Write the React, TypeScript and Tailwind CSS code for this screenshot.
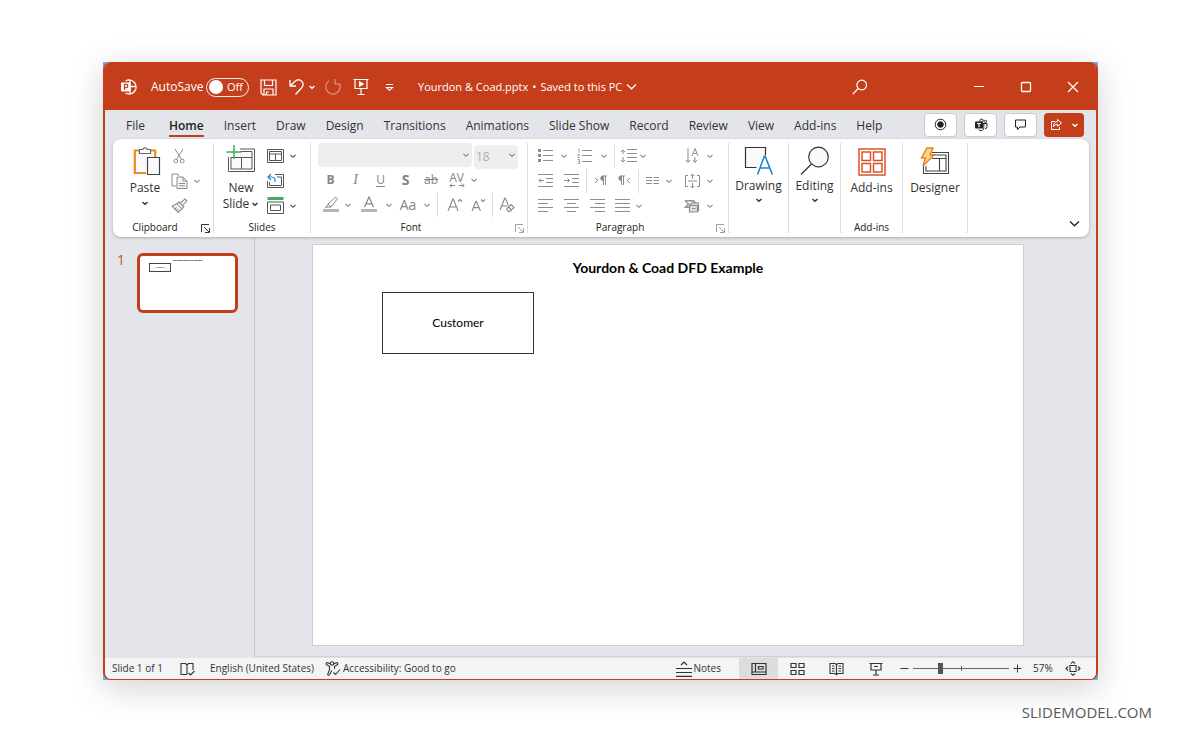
import type { ReactNode } from "react";

type IconProps = { w?: number; h?: number; sw?: number; className?: string; children: ReactNode };

function Icon({ w = 16, h = 16, sw = 1, className = "", children }: IconProps) {
  return (
    <svg
      width={w}
      height={h}
      viewBox={`0 0 ${w} ${h}`}
      fill="none"
      stroke="currentColor"
      strokeWidth={sw}
      className={`shrink-0 ${className}`}
      aria-hidden="true"
    >
      {children}
    </svg>
  );
}

function Chevron({ sw = 1.1 }: { sw?: number }) {
  return (
    <Icon w={8} h={8} sw={sw}>
      <path d="M1.5 3 4 5.3 6.5 3" />
    </Icon>
  );
}

function Cell({ w, label, children }: { w: string; label: string; children: ReactNode }) {
  return (
    <button type="button" aria-label={label} className={`flex h-[25px] shrink-0 items-center justify-center ${w}`}>
      {children}
    </button>
  );
}

function Drop({ label, w = "w-[10px]" }: { label: string; w?: string }) {
  return (
    <Cell w={w} label={`${label} options`}>
      <Chevron />
    </Cell>
  );
}

function Sep({ w }: { w: string }) {
  return (
    <span className={`flex h-6 shrink-0 justify-center ${w}`}>
      <span className="w-px bg-[#dcdcdc]" />
    </span>
  );
}

function Launcher() {
  return (
    <Icon w={9} h={9}>
      <path d="M.5 8V.5H8M3 3l5 5M8.5 4v4.5H4" />
    </Icon>
  );
}

function Group({ w, label, launcher, children }: { w: string; label?: string; launcher?: string; children: ReactNode }) {
  return (
    <section className={`flex shrink-0 flex-col border-r border-[#dcdcdc] ${w}`}>
      <div className="h-[77px]">{children}</div>
      <div
        className={
          launcher
            ? "relative flex flex-1 items-center justify-center pr-4 text-[10px] leading-3 text-[#222]"
            : "relative flex flex-1 items-center justify-center text-[10px] leading-3 text-[#222]"
        }
      >
        {label}
        {launcher && (
          <button type="button" aria-label={`${label} settings`} className={`absolute bottom-0 right-[3px] ${launcher}`}>
            <Launcher />
          </button>
        )}
      </div>
    </section>
  );
}

const tabs = [
  "File", "Home", "Insert", "Draw", "Design", "Transitions", "Animations",
  "Slide Show", "Record", "Review", "View", "Add-ins", "Help",
];

function TitleBar() {
  return (
    <header className="flex h-12 shrink-0 items-center bg-[#c43e1c] pl-[15px] pt-[2px] text-xs text-white">
      <Icon w={18} h={18} sw={1.3}>
        <path d="M5.5 3A7 7 0 1 1 5.5 15M10 2v14M10 8.5h6.5" />
        <rect x="1" y="4.500" width="9.500" height="9" rx="1" fill="white" stroke="none" />
        <path d="M4.500 11.800V6.400h1.700a1.600 1.600 0 0 1 0 3.200H4.500" stroke="#c43e1c" />
      </Icon>
      <label className="ml-[13px] flex items-center">
        <span className="w-[55px] whitespace-nowrap">AutoSave</span>
        <span className="relative flex h-[19px] w-[43px] items-center rounded-full border border-white/90">
          <input type="checkbox" className="absolute inset-0 appearance-none" />
          <span className="ml-[2px] size-[14px] rounded-full bg-white" />
          <span className="ml-1 text-[11px]">Off</span>
        </span>
      </label>
      <button type="button" aria-label="Save" className="ml-[11px]">
        <Icon w={17} h={17} sw={1.2}>
          <path d="M1 1h15v15H3l-2-2zM4.500 1v5.500h8V1M4 16v-6h9v6M6.500 16v-3h2.500" />
        </Icon>
      </button>
      <button type="button" aria-label="Undo" className="ml-3">
        <Icon w={16} h={18} sw={1.3}>
          <path d="M1 2v6h6M1.300 7.700 5.800 3.500c2.200-2 5-2 6.900-.3s1.900 4.500 0 6.500L6.500 16.500" />
        </Icon>
      </button>
      <button type="button" aria-label="Undo options" className="ml-[3px]">
        <Chevron sw={1.4} />
      </button>
      <button type="button" aria-label="Redo" className="ml-2 text-white/45">
        <Icon w={18} h={18} sw={1.2}>
          <path d="M11 1v5h5M5 2.800A7.200 7.200 0 1 0 15.600 6" />
        </Icon>
      </button>
      <button type="button" aria-label="Start slide show" className="ml-[11px]">
        <Icon w={16} h={18} sw={1.2}>
          <path d="M.5 1.500h15M2 1.500v9h12v-9M8 10.500V16M4.500 16.500h7" />
          <path d="M6.500 3.800v4.400L10.200 6z" fill="currentColor" />
        </Icon>
      </button>
      <button type="button" aria-label="Customize toolbar" className="ml-4">
        <Icon w={9} h={9} sw={1.1}>
          <path d="M1 1.500h7M1.500 4.500h6L4.500 7.300z" />
        </Icon>
      </button>
      <button type="button" className="ml-6 flex items-center gap-1 whitespace-nowrap text-[11px]">
        <span>Yourdon &amp; Coad.pptx</span>
        <span>•</span>
        <span>Saved to this PC</span>
        <Icon w={11} h={8} sw={1.3}>
          <path d="m1 1.500 4.500 4.300L10 1.500" />
        </Icon>
      </button>
      <span className="flex-1" />
      <button type="button" aria-label="Search" className="mr-[72px] flex w-[46px] justify-center">
        <Icon w={16} h={16} sw={1.2}>
          <circle cx="9.700" cy="6" r="4.800" />
          <path d="m6.200 9.500-5.400 5.700" />
        </Icon>
      </button>
      <button type="button" aria-label="Minimize" className="flex w-[47px] justify-center">
        <Icon w={12} h={12} sw={1.2}><path d="M1 5.500h10" /></Icon>
      </button>
      <button type="button" aria-label="Maximize" className="flex w-[47px] justify-center">
        <Icon w={12} h={12} sw={1.3}><rect x="1.500" y="1.500" width="9" height="9" rx="1" /></Icon>
      </button>
      <button type="button" aria-label="Close" className="flex w-[47px] justify-center">
        <Icon w={12} h={12} sw={1.2}><path d="m1 1 10 10M11 1 1 11" /></Icon>
      </button>
    </header>
  );
}

function TabBar() {
  const box = "flex h-6 items-center justify-center rounded border border-[#c9cacd] bg-white text-[#222] w-[33px]";
  const tab = "whitespace-nowrap border-b-2 leading-[18px]";
  return (
    <nav className="flex h-[29px] shrink-0 items-center pl-[21px] pr-3 text-xs text-[#333]">
      <div className="flex gap-5 pt-1">
        {tabs.map((t) => (
          <a
            key={t}
            href="#"
            className={
              t === "Home"
                ? `${tab} ml-1 border-[#c43e1c] font-semibold text-[#222]`
                : `${tab} border-transparent`
            }
          >
            {t}
          </a>
        ))}
      </div>
      <div className="ml-auto flex gap-[7px]">
        <button type="button" aria-label="Record" className={box}>
          <Icon w={13} h={13}>
            <circle cx="6.500" cy="6.500" r="5.300" />
            <circle cx="6.500" cy="6.500" r="2.800" fill="currentColor" />
          </Icon>
        </button>
        <button type="button" aria-label="Present in Teams" className={box}>
          <Icon w={14} h={14}>
            <circle cx="7.500" cy="2.800" r="1.700" />
            <circle cx="11.500" cy="3.400" r="1.100" />
            <path d="M9 5.500h4v3.200a2 2 0 0 1-2 2M9.800 5.500v4a3 3 0 0 1-5.200 2.200" />
            <rect x="1" y="3.500" width="8" height="7" rx="1" fill="currentColor" stroke="none" />
            <path d="M3 5.500h4M5 5.500v3.800" stroke="white" strokeWidth={1.2} />
          </Icon>
        </button>
        <button type="button" aria-label="Comments" className={box}>
          <Icon w={13} h={13}>
            <path d="M1.500 2h10v7H6l-2.600 2.600V9H1.500z" />
          </Icon>
        </button>
        <button type="button" aria-label="Share" className="flex h-6 w-10 items-center justify-center gap-2 rounded bg-[#c43e1c] text-white">
          <Icon w={13} h={13}>
            <path d="M5 3.500H1.500v8h8V9M7.500 1.500 11.600 5 7.500 8.300V6.400C5.700 6.400 4.400 7 3.500 8.600c.1-3 1.500-4.900 4-5.100z" />
          </Icon>
          <Chevron sw={1.5} />
        </button>
      </div>
    </nav>
  );
}

function FontGroup() {
  const line = "flex h-[25px] items-center";
  return (
    <Group w="w-[217px]" label="Font" launcher="text-[#a0a0a0]">
      <div className="pl-[7px] text-[#858585]">
        <div className="flex h-6 gap-[2px]">
          <div className="relative">
            <select disabled aria-label="Font name" className="h-6 w-[154px] appearance-none rounded bg-[#eeeeee]" />
            <span className="pointer-events-none absolute right-[2px] top-2"><Chevron /></span>
          </div>
          <div className="relative">
            <select disabled aria-label="Font size" className="h-6 w-11 appearance-none rounded bg-[#eeeeee] pl-[2px] text-xs text-[#b0b0b0]">
              <option>18</option>
            </select>
            <span className="pointer-events-none absolute right-[2px] top-2"><Chevron /></span>
          </div>
        </div>
        <div className={line}>
          <Cell w="w-[25px]" label="Bold"><b className="text-xs">B</b></Cell>
          <Cell w="w-[25px]" label="Italic"><i className="font-['Liberation_Serif',serif] text-sm">I</i></Cell>
          <Cell w="w-[25px]" label="Underline"><u className="text-xs underline-offset-2">U</u></Cell>
          <Cell w="w-[25px]" label="Shadow"><b className="text-sm">S</b></Cell>
          <Cell w="w-[26px]" label="Strikethrough"><s className="text-xs">ab</s></Cell>
          <Cell w="w-[25px]" label="Character spacing">
            <span className="flex flex-col items-center text-xs leading-[11px]">
              AV
              <Icon w={16} h={5}><path d="M3 .5 1 2.500l2 2M1 2.500h5M13 .5l2 2-2 2M15 2.500h-5" /></Icon>
            </span>
          </Cell>
          <Drop label="Character spacing" />
        </div>
        <div className={line}>
          <Cell w="w-[25px]" label="Highlight">
            <Icon w={16} h={17}>
              <path d="m5 8 7-6.300c1-.8 2.600.6 1.900 1.700L8 11H4l-1.500.8L5 8zM5 8l3 3" />
              <path d="M0 14.500h16" strokeWidth={3} stroke="#b5b5b5" />
            </Icon>
          </Cell>
          <Drop label="Highlight" />
          <Cell w="w-[32px]" label="Font color">
            <Icon w={16} h={17}>
              <path d="m3.500 11 4.500-10 4.500 10M5 7.800h6" strokeWidth={1.2} />
              <path d="M0 14.500h16" strokeWidth={3} stroke="#b5b5b5" />
            </Icon>
          </Cell>
          <Drop label="Font color" w="w-[7px]" />
          <Cell w="w-[32px]" label="Change case"><span className="text-sm">Aa</span></Cell>
          <Drop label="Change case" w="w-[6px]" />
          <Sep w="w-[15px]" />
          <Cell w="w-[20px]" label="Grow font">
            <Icon w={16} h={16} sw={1.1}><path d="m1 14 4.800-12h.5l4.800 12M2.800 10h6.600M11 4.500 13 2.500l2 2" /></Icon>
          </Cell>
          <Cell w="w-[25px]" label="Shrink font">
            <Icon w={16} h={16} sw={1.1}><path d="m2 14 4-9.800h.3L10.400 14M3.600 10.600h5.400M11 2.500l2 2 2-2" /></Icon>
          </Cell>
          <Sep w="w-[4px]" />
          <Cell w="w-[26px]" label="Clear formatting">
            <Icon w={16} h={16} sw={1.1}>
              <path d="m1 13 4.800-12h.4l3.200 7.600M2.700 9h5.500" />
              <path d="m8 11.500 4-4 3 3-4 4H9.500L7.800 12.700zM9.500 10l3 3" />
            </Icon>
          </Cell>
        </div>
      </div>
    </Group>
  );
}

function ParagraphGroup() {
  const line = "flex h-[25px] items-center";
  return (
    <Group w="w-[201px]" label="Paragraph" launcher="text-[#a0a0a0]">
      <div className="pl-1 pr-[13px] text-[#8d8d8d]">
        <div className={line}>
          <Cell w="w-[26px]" label="Bullets">
            <Icon w={15} h={15}>
              <path d="M5 2.500h10M5 7.500h10M5 12.500h10" />
              <path d="M0 2.500h3M0 7.500h3M0 12.500h3" strokeWidth={3} />
            </Icon>
          </Cell>
          <Drop label="Bullets" w="w-[12px]" />
          <Cell w="w-[28px]" label="Numbering">
            <Icon w={15} h={16}>
              <path d="M5 2.500h10M5 7.500h10M5 13.500h10" />
              <path d="M1 1h1v3.500M.5 6.500h2L.7 9.500h2M.5 11.500h2v4h-2M1 13.500h1.500" strokeWidth={0.8} />
            </Icon>
          </Cell>
          <Drop label="Numbering" w="w-[12px]" />
          <Sep w="w-[9px]" />
          <Cell w="w-[18px]" label="Line spacing">
            <Icon w={17} h={16}>
              <path d="M7 1.500h10M7 5.500h10M7 9.500h10M7 13.500h10M3 2v4M1 4l2-2 2 2M3 9v5M1 12l2 2 2-2" />
            </Icon>
          </Cell>
          <Drop label="Line spacing" w="w-[12px]" />
          <span className="flex-1" />
          <Cell w="w-[26px]" label="Text direction">
            <Icon w={14} h={17}>
              <path d="M3 1v14M1 13l2 2.500L5 13M10 10v5M8 13l2 2.500 2-2.500M7 9l3-7.500L13 9M8.200 6.500h3.600" />
            </Icon>
          </Cell>
          <Drop label="Text direction" />
        </div>
        <div className={line}>
          <Cell w="w-[26px]" label="Decrease indent">
            <Icon w={15} h={15}><path d="M0 1.500h15M8 5.500h7M8 9.500h7M0 13.500h15M6 7.500H1M3 5.500l-2 2 2 2" /></Icon>
          </Cell>
          <Cell w="w-[26px]" label="Increase indent">
            <Icon w={15} h={15}><path d="M0 1.500h15M8 5.500h7M8 9.500h7M0 13.500h15M0 7.500h5.500M3.500 5.500l2 2-2 2" /></Icon>
          </Cell>
          <Sep w="w-[4px]" />
          <Cell w="w-[24px]" label="Left to right">
            <Icon w={13} h={11}>
              <path d="m1 3 3 2.500L1 8M9.500 1v9M11.500 1v9M8 1h5" />
              <path d="M9 1a2.200 2.200 0 0 0 0 4.500z" fill="currentColor" />
            </Icon>
          </Cell>
          <Cell w="w-[24px]" label="Right to left">
            <Icon w={13} h={11}>
              <path d="m12 3-3 2.500L12 8M3.500 1v9M5.500 1v9M2 1h5" />
              <path d="M3 1a2.200 2.200 0 0 0 0 4.500z" fill="currentColor" />
            </Icon>
          </Cell>
          <Sep w="w-[4px]" />
          <Cell w="w-[24px]" label="Columns">
            <Icon w={13} h={9}><path d="M0 1.500h6M0 4.500h6M0 7.500h6M7.500 1.500H13M7.500 4.500H13M7.500 7.500H13" /></Icon>
          </Cell>
          <Drop label="Columns" />
          <span className="flex-1" />
          <Cell w="w-[26px]" label="Align text">
            <Icon w={17} h={16}>
              <path d="M4 2.500H1.500v11H4M13 2.500h2.500v11H13M4 8h9M8.500 1v5M6.500 3l2-2 2 2M8.500 10v5M6.500 13l2 2 2-2" />
            </Icon>
          </Cell>
          <Drop label="Align text" />
        </div>
        <div className={line}>
          <Cell w="w-[26px]" label="Align left">
            <Icon w={15} h={15}><path d="M0 1.500h15M0 5.500h10M0 9.500h15M0 13.500h10" /></Icon>
          </Cell>
          <Cell w="w-[26px]" label="Center">
            <Icon w={15} h={15}><path d="M0 1.500h15M3 5.500h9M0 9.500h15M3 13.500h9" /></Icon>
          </Cell>
          <Cell w="w-[26px]" label="Align right">
            <Icon w={15} h={15}><path d="M0 1.500h15M5 5.500h10M0 9.500h15M5 13.500h10" /></Icon>
          </Cell>
          <Cell w="w-[24px]" label="Justify">
            <Icon w={15} h={15}><path d="M0 1.500h15M0 5.500h15M0 9.500h15M0 13.500h15" /></Icon>
          </Cell>
          <Drop label="Justify" />
          <span className="flex-1" />
          <Cell w="w-[26px]" label="Convert to SmartArt">
            <Icon w={16} h={14} sw={1.2}>
              <path d="M1 1.500h8.500l2.500 3M1 1.500 4.500 5 1 8.500h5" fill="#bbb" />
              <path d="M5.500 6 8 4h6.500v7.500L13 13H5.500z" fill="#ddd" />
              <path d="M5.500 6.500h8V13M8 9.500h3.500" />
            </Icon>
          </Cell>
          <Drop label="Convert to SmartArt" />
        </div>
      </div>
    </Group>
  );
}

function BigButton({ icon, text, drop, low }: { icon: ReactNode; text: string; drop?: boolean; low?: boolean }) {
  return (
    <button type="button" className="flex w-full flex-col items-center whitespace-nowrap text-xs leading-4 text-[#333]">
      <span className={low ? "flex h-[37px] items-center" : "flex h-[35px] items-center"}>{icon}</span>
      {text}
      {drop && <span className="mt-[2px]"><Chevron sw={1.4} /></span>}
    </button>
  );
}

function Ribbon() {
  return (
    <div className="relative mx-2 mr-[7px] flex h-[98px] shrink-0 rounded-lg bg-white pb-1 pt-1 shadow-[0_1px_3px_rgba(0,0,0,0.25)]">
      <Group w="w-[101px]" label="Clipboard" launcher="text-[#333]">
        <div className="flex pl-[18px]">
          <button type="button" className="flex w-7 flex-col items-center text-xs leading-4 text-[#333]">
            <Icon w={28} h={31} sw={1.2} className="ml-1 mt-[2px]">
              <path d="M6 5.500H1.800V28H13M18 5.500h4.200V12" stroke="#ee8a1d" strokeWidth={2.2} />
              <path d="M4 7v19h9V12h7V7" fill="#fafafa" stroke="none" />
              <path d="M6.500 8.500v-4h3.200a2.400 2.400 0 0 1 4.600 0h3.200v4z" fill="white" stroke="#666" />
              <path d="M14.500 12.500h12v17h-12z" fill="#fafafa" stroke="#444" />
            </Icon>
            <span className="mt-1">Paste</span>
            <span className="mt-[3px]"><Chevron sw={1.4} /></span>
          </button>
          <div className="ml-[7px] text-[#8d8d8d]">
            <Cell w="w-[26px]" label="Cut">
              <Icon w={12} h={16}>
                <path d="m2 1 6.500 10.500M10 1 3.500 11.500" />
                <circle cx="2.800" cy="13" r="1.900" />
                <circle cx="9.200" cy="13" r="1.900" />
              </Icon>
            </Cell>
            <div className="flex">
              <Cell w="w-[26px]" label="Copy">
                <Icon w={17} h={16}>
                  <path d="M5.500 13H1V1h6v2" />
                  <path d="M6 4h6l4 4v7.500H6z" fill="#f4f4f4" />
                  <path d="M12 4v4h4M8 10.500h6M8 12.800h6" />
                </Icon>
              </Cell>
              <Drop label="Copy" />
            </div>
            <Cell w="w-[26px]" label="Format painter">
              <Icon w={17} h={16} sw={1.1}>
                <path d="m9.500 5 4.500-4 1.800 1.800L12 7.200M7.800 4l5 5-2 1.800-5-5zM5.800 5.800 1.200 8.200l6 6.300 3.600-3.700M3.500 11l2.300-1.500M5.300 12.800l2.500-1.700" />
              </Icon>
            </Cell>
          </div>
        </div>
      </Group>

      <Group w="w-[97px]" label="Slides">
        <div className="flex pl-[9px]">
          <button type="button" className="flex w-9 flex-col items-center whitespace-nowrap text-xs text-[#333]">
            <Icon w={30} h={31} className="mt-px">
              <path d="M14 5h14.500v22.500h-26V13" stroke="#555" />
              <path d="M14 7.500h12v17.500H5V13" fill="#fafafa" stroke="#555" />
              <path d="M5 13.500h21M15.500 13.500V25" stroke="#555" />
              <path d="M8 1v14M.5 8h15" stroke="#3cae5c" strokeWidth={1.5} />
            </Icon>
            <span className="mt-[5px] leading-4">New</span>
            <span className="flex items-center gap-[2px] leading-4">Slide <Chevron sw={1.4} /></span>
          </button>
          <div className="ml-[3px] text-[#555]">
            <div className="flex">
              <Cell w="w-[26px]" label="Layout">
                <Icon w={17} h={14}><path d="M.5.500h16v13H.500zM2.500 2.500h12v9h-12zM2.500 5h12M8.500 5v6.500" /></Icon>
              </Cell>
              <Drop label="Layout" />
            </div>
            <Cell w="w-[26px]" label="Reset slide">
              <Icon w={17} h={15}>
                <path d="M8 1.500h8.500v13H.500V8M10 4h4.500v8.500h-12V9" />
                <path d="M4 1 1 4l3 3M1 4h3.500c3 0 4 2 3.500 5" stroke="#1b86c9" strokeWidth={1.2} />
              </Icon>
            </Cell>
            <div className="flex">
              <Cell w="w-[26px]" label="Section">
                <Icon w={17} h={17}>
                  <path d="M.5 1.500h16" stroke="#3cae5c" strokeWidth={3} />
                  <path d="M.5 5h16v11.500H.500zM3.500 8h10v5.500h-10z" />
                </Icon>
              </Cell>
              <Drop label="Section" />
            </div>
          </div>
        </div>
      </Group>

      <FontGroup />
      <ParagraphGroup />

      <Group w="w-[60px]">
        <BigButton
          text="Drawing"
          drop
          icon={
            <Icon w={30} h={30} sw={1.2}>
              <path d="M12.500 21.500h-11V1.500h20V9" fill="#fafafa" />
              <path d="m13.500 28.500 7-18.500h.6l7.200 18.500M16 22h9.500" stroke="#1b86c9" strokeWidth={1.6} />
            </Icon>
          }
        />
      </Group>
      <Group w="w-[52px]">
        <BigButton
          text="Editing"
          drop
          icon={
            <Icon w={30} h={30} sw={1.2}>
              <circle cx="18.500" cy="11" r="9.800" fill="#fafafa" />
              <path d="M11.500 18 1 28.500" />
            </Icon>
          }
        />
      </Group>
      <Group w="w-[62px]" label="Add-ins">
        <BigButton
          text="Add-ins"
          low
          icon={
            <Icon w={28} h={28} sw={1.5} className="text-[#d9532c]">
              <path d="M1 1h26v26H1zM4 4h8.500v8.500H4zM15.500 4H24v8.500h-8.500zM4 15.500h8.500V24H4zM15.500 15.500H24V24h-8.500z" />
            </Icon>
          }
        />
      </Group>
      <Group w="w-[65px]">
        <BigButton
          text="Designer"
          low
          icon={
            <Icon w={30} h={32} sw={1.1}>
              <path d="M12 6.500h16.500v21h-25V20M12 9h14v16H6v-5M12 12.500h14M19.500 12.500V25" stroke="#444" />
              <path d="M7 2h6l-3 7h4L3 20l2.500-8H1.500z" fill="#fbd58a" stroke="#e8811a" strokeWidth={1.4} />
            </Icon>
          }
        />
      </Group>
      <button type="button" aria-label="Collapse ribbon" className="ml-auto mr-[9px] self-end pb-[5px] text-[#222]">
        <Icon w={11} h={8} sw={1.3}><path d="m1 1.500 4.500 4.300L10 1.500" /></Icon>
      </button>
    </div>
  );
}

function Workspace() {
  return (
    <main className="flex flex-1">
      <aside className="w-[150px] shrink-0 border-r border-[#c8cad0] pl-3 pt-4">
        <button type="button" className="flex items-start gap-3 text-sm leading-[14px] text-[#d0492a]">
          <span className="w-2">1</span>
          <span className="relative block h-[60px] w-[101px] rounded-md border-[3px] border-[#c43e1c] bg-white text-black">
            <span className="block pt-1 text-center text-[2px] font-bold leading-[2px]">Yourdon &amp; Coad DFD Example</span>
            <span className="absolute left-[9px] top-[7px] flex h-[9px] w-[22px] items-center justify-center border border-[#444] text-[2px] leading-[2px]">
              Customer
            </span>
          </span>
        </button>
      </aside>
      <div className="flex flex-1 border-b border-[#cfd1d6] pb-[10px] pl-[57px] pr-[72px] pt-[7px]">
        <div className="relative flex-1 border border-[#cfcfcf] bg-white font-['Lato','Open_Sans',sans-serif] text-black">
          <h1 className="pt-[14px] text-center text-sm font-bold leading-[18px]">Yourdon &amp; Coad DFD Example</h1>
          <div className="absolute left-[69px] top-[47px] flex h-[62px] w-[152px] items-center justify-center border border-[#333] text-xs">
            Customer
          </div>
        </div>
      </div>
    </main>
  );
}

function StatusBar() {
  const view = "flex h-full w-[39px] items-center justify-center";
  return (
    <footer className="flex h-[22px] shrink-0 items-center whitespace-nowrap border-t border-[#e4e4e4] bg-[#f4f4f4] pl-[7px] pr-[15px] text-[10px] text-[#333]">
      <span className="w-[68px]">Slide 1 of 1</span>
      <button type="button" aria-label="Spelling" className="w-[30px]">
        <Icon w={16} h={14} sw={1.1}>
          <path d="M7 12.500H1V1.500h4.500L7 3l1.500-1.500H13V8M7 3v9.500M8.500 11l2 2L14.500 9" />
        </Icon>
      </button>
      <button type="button" className="w-[115px] text-left">English (United States)</button>
      <button type="button" className="flex items-center gap-[2px]">
        <Icon w={16} h={15} sw={1.1}>
          <circle cx="7" cy="2.500" r="1.700" />
          <path d="M5.300 3 3 1.800C1.500 1.200.5 3 1.800 3.800L4.500 5.500V9l-1.700 4c-.3 1.200 1 1.700 1.700.7L7 9.500M8.700 3 11 1.800c1.500-.6 2.500 1.200 1.200 2L9.500 5.500V8M8.500 11.500l2 2L15 8.500" />
        </Icon>
        Accessibility: Good to go
      </button>
      <button type="button" className="ml-auto mr-[18px] flex items-center gap-[2px]">
        <Icon w={16} h={16} sw={1.2}><path d="M0 7.500h16M0 11.500h16M0 15.400h16M5 4l3-3 3 3" /></Icon>
        Notes
      </button>
      <button type="button" aria-label="Normal view" className={`${view} bg-[#dddddd]`}>
        <Icon w={16} h={14} sw={1.2}><path d="M1 1.500h14v11H1zM4.500 1.500v8.500H15M7.500 4.500h4.500v2.500H7.500zM1 10h3.500" /></Icon>
      </button>
      <button type="button" aria-label="Slide sorter" className={view}>
        <Icon w={15} h={14} sw={1.2}><path d="M1 1.500h5v4H1zM9 1.500h5v4H9zM1 8.500h5v4H1zM9 8.500h5v4H9z" /></Icon>
      </button>
      <button type="button" aria-label="Reading view" className={view}>
        <Icon w={15} h={14} sw={1.1}><path d="M7.500 2.500 6 1.500H1v10h5l1.500 1 1.500-1h5v-10H9zM7.500 2.500v10M3 4h2.500M3 6.500h2.500M3 9h2.500M9.500 4H12M9.500 6.500H12M9.500 9H12" /></Icon>
      </button>
      <button type="button" aria-label="Slide show" className={view}>
        <Icon w={14} h={14} sw={1.2}><path d="M.5 1.500h13M2 1.500v6.500h10V1.500M7 8v4.500M4 13h6M5 4.500h4" /></Icon>
      </button>
      <button type="button" aria-label="Zoom out" className="ml-[5px]">
        <Icon w={9} h={9}><path d="M.5 4.500h8" /></Icon>
      </button>
      <div className="relative mx-1 flex w-24 items-center">
        <span className="absolute left-12 h-[5px] w-px bg-[#666]" />
        <input
          type="range"
          aria-label="Zoom"
          min={0}
          max={100}
          defaultValue={27}
          className="h-px w-full appearance-none bg-[#666] [&::-webkit-slider-thumb]:h-[11px] [&::-webkit-slider-thumb]:w-[5px] [&::-webkit-slider-thumb]:appearance-none [&::-webkit-slider-thumb]:bg-[#555]"
        />
      </div>
      <button type="button" aria-label="Zoom in">
        <Icon w={9} h={9}><path d="M.5 4.500h8M4.500.500v8" /></Icon>
      </button>
      <span className="ml-[11px] w-8">57%</span>
      <button type="button" aria-label="Fit slide to window">
        <Icon w={16} h={15} sw={1.1}>
          <path d="M5 4.500h6v6H5zM6 2.500 8 .7l2 1.800M6 12.500l2 1.800 2-1.800M3 5.500 1 7.500l2 2M13 5.500l2 2-2 2" />
        </Icon>
      </button>
    </footer>
  );
}

export default function App() {
  return (
    <div className="flex min-h-screen flex-col bg-white pt-[62px] font-['Open_Sans','Noto_Sans',sans-serif]">
      <div className="ml-[103px] mr-[102px] flex flex-1 flex-col bg-[#74abd0] shadow-[0_8px_32px_rgba(0,0,0,0.18)]">
        <div className="flex flex-1 flex-col overflow-hidden rounded-lg border-x-2 border-b border-[#c43e1c] bg-[#e3e5eb]">
          <TitleBar />
          <TabBar />
          <Ribbon />
          <Workspace />
          <StatusBar />
        </div>
      </div>
      <p className="flex h-[63px] items-center justify-end pr-12 pt-[2px] text-[15px] text-[#595959]">SLIDEMODEL.COM</p>
    </div>
  );
}
